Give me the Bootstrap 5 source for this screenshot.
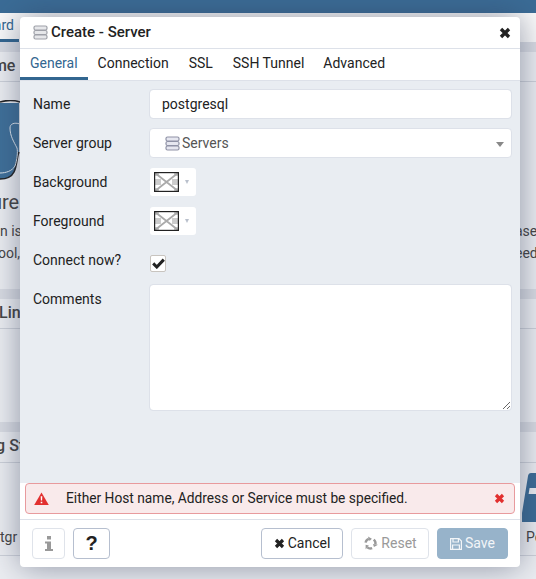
<!DOCTYPE html>
<html lang="en">
<head>
  <meta charset="UTF-8">
  <meta name="viewport" content="width=device-width, initial-scale=1">
  <title>Create - Server</title>
  <link href="https://cdn.jsdelivr.net/npm/bootstrap@5.3.3/dist/css/bootstrap.min.css" rel="stylesheet">
  <style>
    html, body {
      height: 100%;
    }
    body {
      background-color: #eceef2;
      font-family: Roboto, "Liberation Sans", sans-serif;
      font-size: 14px;
      color: #222;
      overflow: hidden;
    }
    .page-shell {
      height: 579px;
      overflow: hidden;
      color: #444;
    }
    .top-strip {
      height: 13px;
      background-color: #3b6c96;
    }
    .tab-strip {
      height: 29px;
      background-color: #fafafa;
    }
    .tab-strip span {
      width: 19px;
      height: 29px;
      padding-top: 2px;
      border-bottom: 3px solid #326690;
      color: #326690;
      white-space: nowrap;
      justify-content: flex-end;
    }
    .tab-strip em {
      font-style: normal;
      margin-right: 5px;
    }
    .panel-band {
      height: 10px;
      background-color: #d9dce3;
    }
    .panel-head {
      height: 30px;
      border-bottom: 1px solid #cdd1d9;
      font-size: 16px;
      font-weight: 500;
      line-height: 28px;
      white-space: nowrap;
    }
    .head-w { margin-left: -51px; }
    .head-l { margin-left: -1px; }
    .head-g { margin-left: -47px; }
    .head-row-3 { height: 31px; }
    .welcome-body {
      height: 207px;
      padding-top: 18px;
    }
    .links-body { height: 93px; }
    .start-body {
      height: 59px;
      padding-top: 10px;
    }
    .elephant {
      display: block;
    }
    .big-word {
      margin: 8px 0 5px -48px;
      font-size: 20px;
      line-height: 26px;
      white-space: nowrap;
    }
    .para-line {
      height: 22px;
      line-height: 22px;
      white-space: nowrap;
    }
    .para-text {
      margin-left: -2px;
    }
    .para-right {
      width: 21px;
    }
    .logo-wrap {
      margin-left: auto;
      width: 14px;
      height: 40px;
    }
    .logo-rule {
      margin-left: auto;
      width: 14px;
      height: 9px;
      background-color: #3b6c96;
    }
    .foot-row {
      height: 34px;
      line-height: 30px;
      border-bottom: 1px solid #cdd1d9;
      white-space: nowrap;
    }
    .foot-right {
      width: 10px;
    }

    .dlg {
      position: absolute;
      left: 20px;
      top: 17px;
      width: 500px;
      height: 550px;
      border-radius: 4px;
      background-color: #fff;
      box-shadow: 0 0 32px rgba(45, 55, 85, .5);
    }
    .dlg-title {
      height: 32px;
      padding: 0 9px 0 13px;
      border-bottom: 1px solid #dde1e9;
      font-size: 15px;
      font-weight: 500;
      gap: 3px;
    }
    .dlg-tabs {
      height: 32px;
      border-bottom: 1px solid #dde1e9;
    }
    .dlg-tabs .nav-link {
      height: 31px;
      padding: 4px 10px 0;
      color: #222;
      border-bottom: 3px solid transparent;
    }
    .dlg-tabs .nav-link.active {
      color: #326690;
      border-bottom-color: #326690;
    }
    .dlg-tabs .nav-item:last-child .nav-link {
      margin-left: -1px;
    }
    .dlg-form {
      background-color: #e9edf2;
      padding: 8px 8px 0 13px;
    }
    .field-row {
      margin-bottom: 9px;
    }
    .field-row-wide {
      margin-bottom: 10px;
    }
    .field-label {
      width: 116px;
      flex: none;
      line-height: 30px;
    }
    .dlg-form .form-control {
      height: 30px;
      padding: 0 12px;
      font-size: 14px;
      color: #222;
      border-color: #dde1e9;
      border-radius: 4px;
    }
    .select-box {
      position: relative;
      height: 30px;
      flex-grow: 1;
      gap: 2px;
      padding: 0 15px;
      background-color: #fff;
      border: 1px solid #dde1e9;
      border-radius: 4px;
      color: #555;
    }
    .select-caret {
      position: absolute;
      right: 7px;
      top: 13px;
      width: 0;
      height: 0;
      border-left: 4px solid transparent;
      border-right: 4px solid transparent;
      border-top: 5px solid #888;
    }
    .swatch-row {
      height: 28px;
      margin-bottom: 11px;
    }
    .swatch-row .field-label {
      line-height: 28px;
    }
    .swatch-btn {
      width: 46px;
      height: 28px;
      margin-left: 1px;
      padding: 4px;
      gap: 6px;
      background-color: #fff;
      border-radius: 3px;
    }
    .swatch-caret {
      width: 0;
      height: 0;
      border-left: 2.5px solid transparent;
      border-right: 2.5px solid transparent;
      border-top: 4px solid #b9c0cc;
    }
    .check-row {
      height: 38px;
    }
    .check-row .field-label {
      line-height: 28px;
    }
    .check-box {
      width: 16px;
      height: 17px;
      margin-top: 9px;
      margin-left: 1px;
      background-color: #fff;
      border: 1px solid #c8c4bf;
      border-radius: 2px;
    }
    .comments-label {
      line-height: 30px;
    }
    .dlg-form textarea.form-control {
      height: 127px;
      resize: both;
    }
    .dlg-alert {
      margin: 0 5px 5px;
      height: 31px;
      padding: 0 9px 0 8px;
      background-color: #f9eaeb;
      border: 1px solid #e89a9d;
      border-radius: 4px;
      font-size: 13.75px;
    }
    .alert-msg {
      margin-left: 17px;
    }
    .dlg-foot {
      height: 48px;
      padding: 8px 12px 0;
      border-top: 1px solid #dde1e9;
    }
    .foot-btn {
      height: 31px;
      padding: 0;
      gap: 3px;
      font-size: 14px;
      color: #222;
      background-color: #fff;
      border: 1px solid #b6bfcf;
      border-radius: 4px;
    }
    .foot-btn:disabled {
      opacity: 1;
      color: #999;
      background-color: #fff;
      border-color: #dfe3ea;
    }
    .btn-info-i {
      width: 33px;
    }
    .btn-help {
      width: 37px;
      font: 700 20px "Liberation Sans", sans-serif;
    }
    .btn-cancel { width: 82px; }
    .btn-reset { width: 78px; }
    .foot-btn.btn-save {
      width: 71px;
      color: #f2f5f8;
      background-color: #97b3ca;
      border-color: #97b3ca;
    }
  </style>
</head>
<body>
  <!-- pagina por tras do dialogo -->
  <div class="page-shell">
    <div class="top-strip"></div>
    <div class="tab-strip"><span class="d-flex"><em>Dashboard</em></span></div>

    <div class="panel-band"></div>
    <div class="panel-head"><span class="d-inline-block head-w">Welcome</span></div>
    <div class="welcome-body">
      <svg class="elephant" width="20" height="81" viewBox="0 0 20 81">
        <path d="M0 3H19V52C17 56 17 66 14 72C11 78 5 79 0 79Z" fill="#3f7099"/>
        <path d="M0 2C7 0 14 0 20 2M19 52C17 56 17 66 14 72C11 78 5 79 0 79" fill="none" stroke="#222" stroke-width="1.6"/>
        <path d="M20 24C14 22 10 24 10 28C10 36 14 42 17 48C18 52 17 60 15 66C12 71 6 73 0 73" fill="none" stroke="#dfe6ee" stroke-width="1"/>
      </svg>
      <div class="big-word">Feature rich</div>
      <div class="para-line d-flex"><span>n is</span><span class="para-right ms-auto">ase</span></div>
      <div class="para-line d-flex"><span class="para-text">ool,</span><span class="para-right ms-auto">eed</span></div>
    </div>

    <div class="panel-band"></div>
    <div class="panel-head"><span class="d-inline-block head-l">Links</span></div>
    <div class="links-body"></div>

    <div class="panel-band"></div>
    <div class="panel-head head-row-3"><span class="d-inline-block head-g">Getting Started</span></div>
    <div class="start-body">
      <svg class="logo-wrap d-block" viewBox="0 0 14 40">
        <path d="M0 40L6 3Q6.5 0 9 0H14V15H7.6L6.6 21H14V40Z" fill="#3b6c96"/>
      </svg>
      <div class="logo-rule"></div>
    </div>
    <div class="foot-row d-flex"><span>tgr</span><span class="ms-auto foot-right">Pe</span></div>
  </div>

  <!-- dialogo -->
  <div class="dlg d-flex flex-column">
    <div class="dlg-title d-flex align-items-center">
      <svg width="15" height="15" viewBox="0 0 15 15" fill="#e6e7ea" stroke="#9ea0a8" stroke-width="1.2">
        <rect x="1" y="1" width="13" height="4" rx="1.5"/>
        <rect x="1" y="5.5" width="13" height="4" rx="1.5"/>
        <rect x="1" y="10" width="13" height="4" rx="1.5"/>
      </svg>
      <span>Create - Server</span>
      <svg class="ms-auto" width="12" height="12" viewBox="0 0 12 12"><path d="M2 2L10 10M10 2L2 10" stroke="#222" stroke-width="3.4"/></svg>
    </div>

    <ul class="nav dlg-tabs">
      <li class="nav-item"><a class="nav-link active" href="#">General</a></li>
      <li class="nav-item"><a class="nav-link" href="#">Connection</a></li>
      <li class="nav-item"><a class="nav-link" href="#">SSL</a></li>
      <li class="nav-item"><a class="nav-link" href="#">SSH Tunnel</a></li>
      <li class="nav-item"><a class="nav-link" href="#">Advanced</a></li>
    </ul>

    <div class="dlg-form flex-grow-1 d-flex flex-column">
      <div class="field-row d-flex">
        <label class="field-label">Name</label>
        <input class="form-control" type="text" value="postgresql">
      </div>
      <div class="field-row-wide d-flex">
        <label class="field-label">Server group</label>
        <div class="select-box d-flex align-items-center">
          <svg width="15" height="15" viewBox="0 0 15 15" fill="#e6e7f0" stroke="#8f92a6" stroke-width="1.2">
            <rect x="1" y="1" width="13" height="4" rx="1.5"/>
            <rect x="1" y="5.5" width="13" height="4" rx="1.5"/>
            <rect x="1" y="10" width="13" height="4" rx="1.5"/>
          </svg>
          <span>Servers</span>
          <span class="select-caret"></span>
        </div>
      </div>
      <div class="swatch-row d-flex">
        <label class="field-label">Background</label>
        <div class="swatch-btn d-flex align-items-center">
          <svg width="25" height="20" viewBox="0 0 25 20">
            <rect width="25" height="20" fill="#fff"/>
            <path d="M1 1H5V4H1ZM20 1H24V4H20ZM1 7H7V13H1ZM18 7H24V13H18ZM1 16H5V19H1ZM20 16H24V19H20Z" fill="#ccc"/>
            <path d="M1 1L24 19M24 1L1 19" stroke="#aaa" stroke-width="1.8"/>
            <rect x=".6" y=".6" width="23.8" height="18.8" fill="none" stroke="#222" stroke-width="1.2"/>
          </svg>
          <span class="swatch-caret"></span>
        </div>
      </div>
      <div class="swatch-row d-flex">
        <label class="field-label">Foreground</label>
        <div class="swatch-btn d-flex align-items-center">
          <svg width="25" height="20" viewBox="0 0 25 20">
            <rect width="25" height="20" fill="#fff"/>
            <path d="M1 1H5V4H1ZM20 1H24V4H20ZM1 7H7V13H1ZM18 7H24V13H18ZM1 16H5V19H1ZM20 16H24V19H20Z" fill="#ccc"/>
            <path d="M1 1L24 19M24 1L1 19" stroke="#aaa" stroke-width="1.8"/>
            <rect x=".6" y=".6" width="23.8" height="18.8" fill="none" stroke="#222" stroke-width="1.2"/>
          </svg>
          <span class="swatch-caret"></span>
        </div>
      </div>
      <div class="check-row d-flex">
        <label class="field-label">Connect now?</label>
        <span class="check-box d-flex align-items-center justify-content-center">
          <svg width="13" height="11" viewBox="0 0 13 11"><path d="M1.2 5.4L4.8 9L11.8 1.6" fill="none" stroke="#222" stroke-width="3"/></svg>
        </span>
      </div>
      <div class="d-flex">
        <label class="field-label comments-label">Comments</label>
        <textarea class="form-control"></textarea>
      </div>
    </div>

    <div class="dlg-alert d-flex align-items-center">
      <svg width="15" height="13" viewBox="0 0 15 13">
        <path d="M7.5 0.5L14.8 13H0.2Z" fill="#e2302f"/>
        <path d="M6.7 4.2H8.3L8.1 8.6H6.9ZM6.7 9.8H8.3V11.3H6.7Z" fill="#fff"/>
      </svg>
      <span class="alert-msg">Either Host name, Address or Service must be specified.</span>
      <svg class="ms-auto" width="11" height="11" viewBox="0 0 11 11"><path d="M2 2L9 9M9 2L2 9" stroke="#e2302f" stroke-width="3.2"/></svg>
    </div>

    <div class="dlg-foot d-flex gap-2">
      <button class="btn foot-btn btn-info-i d-flex align-items-center justify-content-center" disabled aria-label="Info">
        <svg width="8" height="15" viewBox="0 0 8 15" fill="#999"><path d="M2 0H6V3.6H2ZM0 5.4H6V13H8V15H0V13H2V7.4H0Z"/></svg>
      </button>
      <button class="btn foot-btn btn-help">?</button>
      <button class="btn foot-btn btn-cancel d-flex align-items-center justify-content-center ms-auto">
        <svg width="11" height="11" viewBox="0 0 11 11"><path d="M2 2L9 9M9 2L2 9" stroke="#222" stroke-width="3.2"/></svg>
        Cancel
      </button>
      <button class="btn foot-btn btn-reset d-flex align-items-center justify-content-center" disabled>
        <svg width="15" height="15" viewBox="-7.5 -7.5 15 15">
          <g id="recycle-arm" fill="#999">
            <path d="M-4.9 -.9A5 5 0 0 1 -1.7 -4.7" fill="none" stroke="#999" stroke-width="2.4"/>
            <path d="M-2.6 -7.1L1.4 -4.8L-.9 -2.4Z"/>
          </g>
          <use href="#recycle-arm" transform="rotate(120)"/>
          <use href="#recycle-arm" transform="rotate(240)"/>
        </svg>
        Reset
      </button>
      <button class="btn foot-btn btn-save d-flex align-items-center justify-content-center" disabled>
        <svg width="12" height="12" viewBox="0 0 12 12" fill="none" stroke="#f2f5f8" stroke-width="1.2">
          <path d="M.6.6H9L11.4 3V11.4H.6Z"/>
          <path d="M3 .8V4H8.4V.8M2.6 11.2V7H9.4V11.2"/>
        </svg>
        Save
      </button>
    </div>
  </div>

  <script src="https://cdn.jsdelivr.net/npm/bootstrap@5.3.3/dist/js/bootstrap.bundle.min.js"></script>
</body>
</html>
